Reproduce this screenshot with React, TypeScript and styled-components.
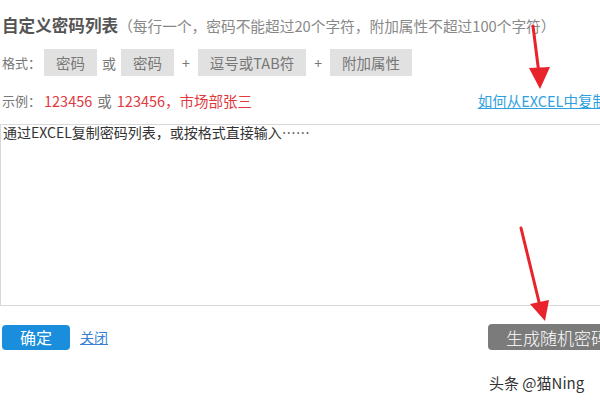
import React from 'react';
import styled, { createGlobalStyle } from 'styled-components';

const GlobalStyle = createGlobalStyle`
    html, body {
        margin: 0;
        padding: 0;
        width: 600px;
        height: 400px;
        overflow: hidden;
        background: #ffffff;
        font-family: "Microsoft YaHei", "Noto Sans CJK SC", "Noto Sans", sans-serif;
    }
`;

const App = () => {
    return (
        <Page>
            <GlobalStyle />

            <TitleRow>
                <Title>自定义密码列表</Title>
                <Hint>（每行一个，密码不能超过20个字符，附加属性不超过100个字符）</Hint>
            </TitleRow>

            <FormatRow>
                <Label>格式：</Label>
                <Chip>密码</Chip>
                <Joiner>或</Joiner>
                <Chip>密码</Chip>
                <Joiner $plus>+</Joiner>
                <Chip>逗号或TAB符</Chip>
                <Joiner $plus>+</Joiner>
                <Chip>附加属性</Chip>
            </FormatRow>

            <ExampleRow>
                <Label>示例：</Label>
                <Red>123456</Red>
                <Joiner>或</Joiner>
                <Red>123456，市场部张三</Red>
                <HelpLink href="#">如何从EXCEL中复制密码</HelpLink>
            </ExampleRow>

            <ListInput placeholder="通过EXCEL复制密码列表，或按格式直接输入……" />

            <ActionRow>
                <PrimaryButton>确定</PrimaryButton>
                <CloseLink href="#">关闭</CloseLink>
                <GrayButton>生成随机密码</GrayButton>
            </ActionRow>

            {/* red annotation arrows drawn over the screenshot */}
            <Arrows width="600" height="400" viewBox="0 0 600 400">
                <line x1="533" y1="26" x2="539" y2="74" stroke="#e8232b" strokeWidth="3" strokeLinecap="round" />
                <polygon points="529,68 550,67 540,89" fill="#e8232b" />
                <line x1="521" y1="228" x2="540" y2="306" stroke="#e8232b" strokeWidth="3" strokeLinecap="round" />
                <polygon points="530,304 549,300 545,321" fill="#e8232b" />
            </Arrows>

            <Watermark>头条 @猫Ning</Watermark>
        </Page>
    );
};

const Page = styled.div`
    position: relative;
    width: 660px;
    height: 400px;
    padding-top: 13px;
    box-sizing: border-box;
`;

const TitleRow = styled.div`
    display: flex;
    align-items: baseline;
    height: 24px;
    line-height: 24px;
    padding-left: 2px;
`;

const Title = styled.span`
    font-size: 16.6px;
    font-weight: bold;
    color: #555;
`;

const Hint = styled.span`
    font-size: 14.7px;
    color: #888;
`;

const FormatRow = styled.div`
    display: flex;
    align-items: center;
    gap: 5px;
    margin-top: 12px;
    height: 27px;
    padding-left: 2px;
    font-size: 14px;
`;

const Label = styled.span`
    flex-shrink: 0;
    width: 37px;
    white-space: nowrap;
    font-size: 13px;
    color: #777;
`;

const Chip = styled.span`
    display: flex;
    align-items: center;
    height: 27px;
    padding: 0 12px;
    background: #e1e1e1;
    color: #777;
    font-size: 14.5px;
`;

const Joiner = styled.span<{ $plus?: boolean }>`
    color: #777;
    margin: ${p => (p.$plus ? '0 3px' : '0')};
`;

const ExampleRow = styled.div`
    display: flex;
    align-items: center;
    gap: 5px;
    margin-top: 14px;
    height: 20px;
    padding-left: 2px;
    font-size: 14.5px;
`;

const Red = styled.span`
    color: #e0393e;
`;

const HelpLink = styled.a`
    margin-left: auto;
    margin-right: 24px;
    color: #2f9fe0;
    text-decoration: underline;
`;

const ListInput = styled.textarea`
    display: block;
    margin-top: 14px;
    width: 640px;
    height: 182px;
    box-sizing: border-box;
    padding: 0 2px;
    border: 1px solid #d8d8d8;
    resize: none;
    outline: none;
    font-family: "Noto Sans CJK SC", sans-serif;
    font-size: 14px;
    line-height: 15px;
    color: #333;

    &::placeholder {
        color: #333;
    }
`;

const ActionRow = styled.div`
    display: flex;
    align-items: center;
    margin-top: 18px;
    height: 26px;
    padding-left: 2px;
`;

const PrimaryButton = styled.button`
    width: 68px;
    height: 25px;
    border: none;
    border-radius: 4px;
    background: #1a8edd;
    color: #fff;
    font-family: inherit;
    font-size: 16px;
    padding: 0;
`;

const CloseLink = styled.a`
    margin-left: 10px;
    font-size: 14px;
    color: #3a7fd5;
    text-decoration: underline;
`;

const GrayButton = styled.button`
    margin-left: auto;
    margin-right: 0;
    width: 172px;
    height: 26px;
    border: none;
    border-radius: 4px;
    background: #7b7b7b;
    color: #fff;
    font-family: inherit;
    font-size: 17px;
    font-weight: 300;
    text-align: left;
    padding: 0 0 0 18px;
`;

const Arrows = styled.svg`
    position: absolute;
    left: 0;
    top: 0;
    pointer-events: none;
`;

const Watermark = styled.div`
    position: absolute;
    left: 489px;
    top: 372px;
    font-size: 15px;
    color: #333;
`;

export default App;
